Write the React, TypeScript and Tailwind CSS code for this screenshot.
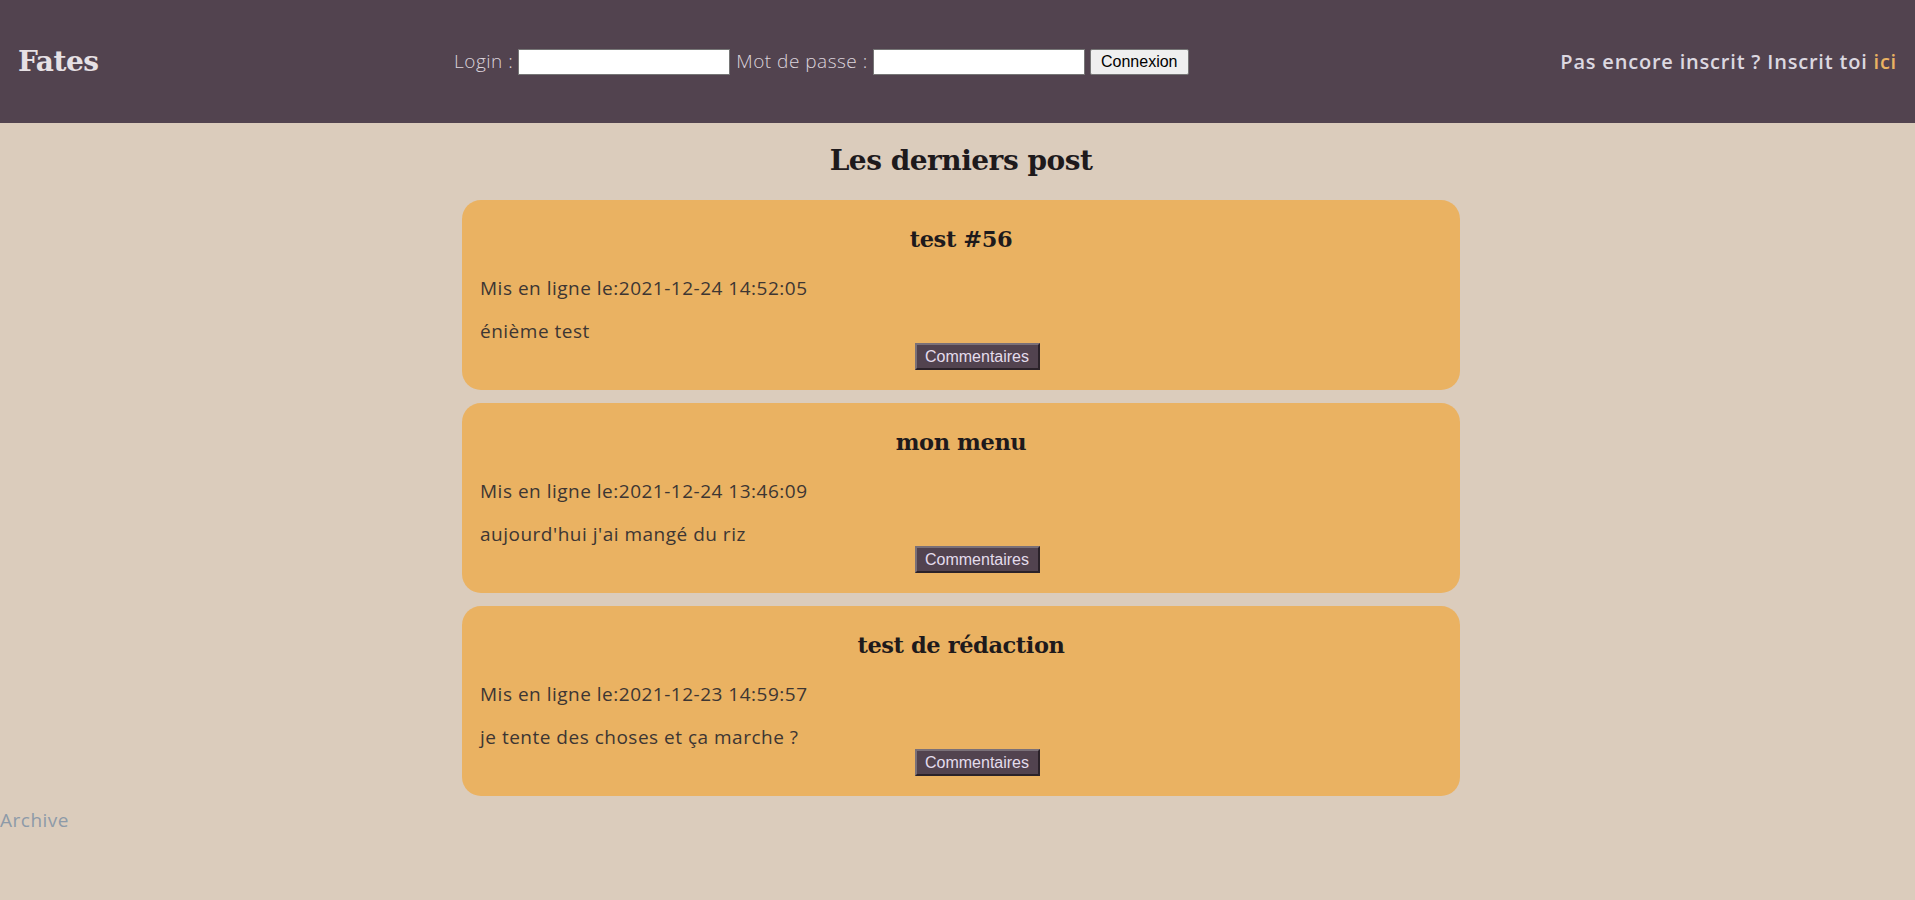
import React from "react";

const posts = [
  { title: "test #56", date: "2021-12-24 14:52:05", body: "énième test" },
  { title: "mon menu", date: "2021-12-24 13:46:09", body: "aujourd'hui j'ai mangé du riz" },
  { title: "test de rédaction", date: "2021-12-23 14:59:57", body: "je tente des choses et ça marche ?" },
];

function Header() {
  return (
    <header className="h-[123px] bg-[#52434f] flex items-center px-[18px]">
      <div className="w-[436px] font-['DejaVu_Serif',serif] font-bold text-[28px] text-[#e6e0e4] tracking-[-0.5px]">
        Fates
      </div>
      <form className="flex items-center gap-[5px] font-['Open_Sans',sans-serif] font-light text-[19px] tracking-[0.5px] text-[#dcd4dc]">
        <label>Login :</label>
        <input type="text" className="w-[212px] h-[26px] bg-white border border-[#767676]" />
        <label className="ml-[1px]">Mot de passe :</label>
        <input type="password" className="w-[212px] h-[26px] bg-white border border-[#767676]" />
        <button
          type="button"
          className="h-[26px] w-[99px] bg-[#efefef] border border-[#767676] rounded-[2px] text-black text-[16px] tracking-normal font-normal font-['Liberation_Sans',sans-serif]"
        >
          Connexion
        </button>
      </form>
      <div className="ml-auto font-['Open_Sans',sans-serif] font-semibold text-[20px] tracking-[0.8px] text-[#dcd8e0]">
        Pas encore inscrit ? Inscrit toi <a className="text-[#eab262]">ici</a>
      </div>
    </header>
  );
}

function Post({ title, date, body }: { title: string; date: string; body: string }) {
  return (
    <div className="w-[998px] h-[190px] bg-[#eab262] rounded-[19px] px-[18px] pt-[25px] flex flex-col">
      <h3 className="text-center h-[29px] leading-[29px] font-['DejaVu_Serif',serif] font-bold text-[22.5px] text-[#1e1a1c] tracking-[-0.4px]">
        {title}
      </h3>
      <p className="mt-[22px] leading-[24px] font-['Open_Sans',sans-serif] text-[19px] tracking-[0.5px] text-[#3d3633]">
        Mis en ligne le:{date}
      </p>
      <p className="mt-[19px] leading-[24px] font-['Open_Sans',sans-serif] text-[19px] tracking-[0.5px] text-[#3d3633]">
        {body}
      </p>
      <div className="flex justify-center pl-[32px]">
        <button
          type="button"
          className="h-[27px] w-[125px] bg-[#52434f] text-[#e4dcec] text-[16px] font-['Liberation_Sans',sans-serif] border-2 border-t-[#7a7078] border-l-[#7a7078] border-r-[#2b2229] border-b-[#2b2229]"
        >
          Commentaires
        </button>
      </div>
    </div>
  );
}

export default function App() {
  return (
    <div className="min-h-[900px] bg-[#dbccbc]">
      <Header />
      <main className="flex flex-col items-center pl-[7px]">
        <h2 className="mt-[21px] h-[34px] leading-[34px] font-['DejaVu_Serif',serif] font-bold text-[28px] text-[#1e1a1c] tracking-[-0.5px]">
          Les derniers post
        </h2>
        <div className="mt-[22px] flex flex-col gap-[13px]">
          {posts.map((p, i) => (
            <Post key={i} {...p} />
          ))}
        </div>
      </main>
      <div className="mt-[12px] font-['Open_Sans',sans-serif] text-[19px] tracking-[0.5px] text-[#8d9aa8] leading-[24px]">
        Archive
      </div>
    </div>
  );
}
